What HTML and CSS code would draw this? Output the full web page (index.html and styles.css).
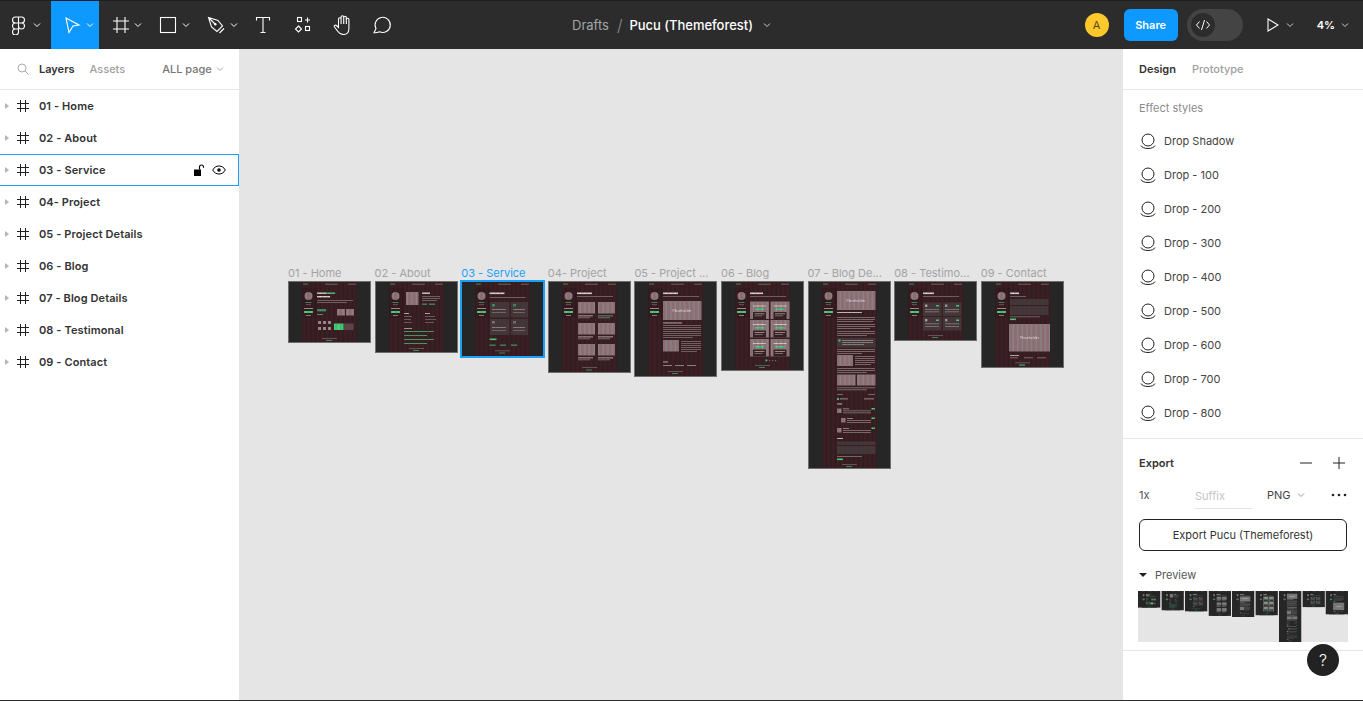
FILE: index.html
```html
<!DOCTYPE html>
<html lang="en">

<head>
    <meta charset="UTF-8" />
    <title>Pucu (Themeforest) - Figma</title>
    <link rel="stylesheet" href="styles.css">
</head>

<body>

    <!-- Frame thumbnails, used on the canvas and again in the export preview -->
    <svg class="sprites" aria-hidden="true">
        <defs>
            <pattern id="cols" width="4.6" height="10" patternUnits="userSpaceOnUse" x="14.5">
                <rect width="3.3" height="10" fill="#7a1f30" />
            </pattern>

            <g id="chrome">
                <rect x="14.5" y="7" width="15" height="30" fill="#1f1416" opacity=".35" />
                <rect x="15" y="2.6" width="5" height="1" fill="#2f9a62" />
                <rect x="37" y="2.8" width="13" height=".7" fill="#8a8a8a" />
                <rect x="60" y="2.8" width="8" height=".7" fill="#8a8a8a" />
                <circle class="ph" cx="20.5" cy="15" r="4" />
                <rect x="17.5" y="21" width="6" height=".8" fill="#39b56f" />
                <rect x="18" y="23.5" width="5" height=".6" fill="#8a8a8a" />
                <rect x="16" y="27" width="9" height=".9" fill="#a9a9a9" />
                <rect x="16" y="30" width="9" height="2" fill="#3ee07f" />
                <rect x="18" y="34" width="5" height=".7" fill="#bcbcbc" />
            </g>

            <symbol id="f1" viewBox="0 0 83 62">
                <rect width="83" height="62" fill="#262626" />
                <rect class="zone" x="14" width="55" height="62" />
                <use href="#chrome" />
                <rect x="29" y="11.5" width="9" height="1.4" fill="#e6e6e6" />
                <rect x="38" y="11.5" width="9" height="1.4" fill="#56d98b" />
                <rect x="29" y="15" width="13" height="1.4" fill="#e6e6e6" />
                <rect x="29" y="19" width="36" height=".7" fill="#8a8a8a" />
                <rect x="29" y="21" width="30" height=".7" fill="#8a8a8a" />
                <rect x="29" y="28" width="9" height="2.4" fill="#2f9a62" />
                <rect x="29" y="33" width="6" height=".8" fill="#9a9a9a" />
                <rect class="ph" x="49" y="28" width="8" height="6.5" />
                <rect class="ph" x="58" y="28" width="8" height="6.5" />
                <rect x="30" y="40" width="3" height="3" fill="#9a8f91" />
                <rect x="35" y="40" width="3" height="3" fill="#9a8f91" />
                <rect x="40" y="40" width="3" height="3" fill="#9a8f91" />
                <rect x="30" y="46" width="3" height="3" fill="#9a8f91" />
                <rect x="35" y="46" width="3" height="3" fill="#9a8f91" />
                <rect x="40" y="46" width="3" height="3" fill="#9a8f91" />
                <rect x="46" y="42.5" width="9.5" height="6.5" fill="#3ee07f" />
                <rect x="56" y="42.5" width="9.5" height="6.5" fill="#5a4a4d" />
                <rect x="34" y="57" width="15" height=".7" fill="#777" />
                <rect x="38" y="59" width="6" height="1" fill="#2f9a62" />
                <rect class="grid" x="14.5" width="54" height="62" />
            </symbol>

            <symbol id="f2" viewBox="0 0 83 72">
                <rect width="83" height="72" fill="#262626" />
                <rect class="zone" x="14" width="55" height="72" />
                <use href="#chrome" />
                <rect class="ph" x="31" y="11" width="12.5" height="13" />
                <rect x="47" y="11.5" width="8" height="1.4" fill="#e6e6e6" />
                <rect x="47" y="15" width="18" height=".7" fill="#8a8a8a" />
                <rect x="47" y="17" width="18" height=".7" fill="#8a8a8a" />
                <rect x="47" y="19" width="15" height=".7" fill="#8a8a8a" />
                <rect x="47" y="22.5" width="5" height="1.4" fill="#2f9a62" />
                <rect x="54" y="22.5" width="6" height="1.4" fill="#2f9a62" />
                <rect x="29" y="32" width="5" height=".9" fill="#c8c8c8" />
                <rect x="50" y="32" width="5" height=".9" fill="#c8c8c8" />
                <rect x="29" y="35" width="8" height=".7" fill="#808080" />
                <rect x="50" y="35" width="10" height=".7" fill="#808080" />
                <rect x="29" y="38" width="7" height=".7" fill="#808080" />
                <rect x="50" y="38" width="11" height=".7" fill="#808080" />
                <rect x="29" y="41" width="8" height=".7" fill="#808080" />
                <rect x="50" y="41" width="9" height=".7" fill="#808080" />
                <rect x="29" y="47" width="8" height=".8" fill="#c8c8c8" />
                <rect x="29" y="50" width="30" height=".9" fill="#3fb873" />
                <rect x="29" y="54" width="23" height=".9" fill="#3fb873" />
                <rect x="29" y="58" width="30" height=".9" fill="#3fb873" />
                <rect x="29" y="62" width="23" height=".9" fill="#3fb873" />
                <rect x="34" y="67" width="15" height=".7" fill="#777" />
                <rect x="38" y="69" width="6" height="1" fill="#2f9a62" />
                <rect class="grid" x="14.5" width="54" height="72" />
            </symbol>

            <symbol id="f3" viewBox="0 0 83 76">
                <rect width="83" height="76" fill="#262626" />
                <rect class="zone" x="14" width="55" height="76" />
                <use href="#chrome" />
                <rect x="28.5" y="11.5" width="15" height="1.6" fill="#e6e6e6" />
                <rect x="28.5" y="16" width="36" height=".7" fill="#8a8a8a" />
                <rect x="29" y="21" width="19.5" height="15.5" fill="#3a3a3a" />
                <rect x="50" y="21" width="17" height="15.5" fill="#3a3a3a" />
                <rect x="29" y="38" width="19.5" height="16" fill="#3a3a3a" />
                <rect x="50" y="38" width="17" height="16" fill="#3a3a3a" />
                <rect x="31" y="23" width="3" height="2.5" fill="#2f9a62" />
                <rect x="52" y="23" width="3" height="2.5" fill="#2f9a62" />
                <rect x="31" y="40" width="3" height="2.5" fill="#777" />
                <rect x="52" y="40" width="3" height="2.5" fill="#777" />
                <rect x="31" y="28" width="14" height=".7" fill="#aaa" />
                <rect x="52" y="28" width="12" height=".7" fill="#aaa" />
                <rect x="31" y="31" width="14" height=".7" fill="#888" />
                <rect x="52" y="31" width="12" height=".7" fill="#888" />
                <rect x="31" y="46" width="14" height=".7" fill="#aaa" />
                <rect x="52" y="46" width="12" height=".7" fill="#aaa" />
                <rect x="31" y="49" width="14" height=".7" fill="#888" />
                <rect x="52" y="49" width="12" height=".7" fill="#888" />
                <rect x="28.5" y="57.5" width="7" height="1.6" fill="#3ee07f" />
                <rect x="28.5" y="63.5" width="6" height="1.4" fill="#2f9a62" />
                <rect x="39" y="63.5" width="6" height="1.4" fill="#2f9a62" />
                <rect x="50" y="63.5" width="6" height="1.4" fill="#2f9a62" />
                <rect x="34" y="69.5" width="15" height=".7" fill="#777" />
                <rect x="38" y="71.5" width="6" height="1" fill="#2f9a62" />
                <rect class="grid" x="14.5" width="54" height="76" />
            </symbol>

            <symbol id="f4" viewBox="0 0 83 92">
                <rect width="83" height="92" fill="#262626" />
                <rect class="zone" x="14" width="55" height="92" />
                <use href="#chrome" />
                <rect x="29" y="11.5" width="15" height="1.6" fill="#e6e6e6" />
                <rect x="29" y="15" width="36" height=".7" fill="#8a8a8a" />
                <rect class="ph" x="30" y="21" width="17" height="11.5" />
                <rect class="ph" x="50" y="21" width="17" height="11.5" />
                <rect class="ph" x="30" y="42" width="17" height="11.5" />
                <rect class="ph" x="50" y="42" width="17" height="11.5" />
                <rect class="ph" x="30" y="63" width="17" height="11.5" />
                <rect class="ph" x="50" y="63" width="17" height="11.5" />
                <rect x="30" y="34.5" width="15" height=".8" fill="#ddd" />
                <rect x="50" y="34.5" width="15" height=".8" fill="#4fc783" />
                <rect x="30" y="36.5" width="12" height=".7" fill="#999" />
                <rect x="50" y="36.5" width="12" height=".7" fill="#999" />
                <rect x="30" y="55.5" width="15" height=".8" fill="#ddd" />
                <rect x="50" y="55.5" width="15" height=".8" fill="#ddd" />
                <rect x="30" y="57.5" width="12" height=".7" fill="#999" />
                <rect x="50" y="57.5" width="12" height=".7" fill="#999" />
                <rect x="30" y="76.5" width="15" height=".8" fill="#ddd" />
                <rect x="50" y="76.5" width="15" height=".8" fill="#ddd" />
                <rect x="30" y="78.5" width="12" height=".7" fill="#999" />
                <rect x="50" y="78.5" width="12" height=".7" fill="#999" />
                <rect x="34" y="86" width="15" height=".7" fill="#777" />
                <rect x="38" y="88.5" width="6" height="1" fill="#2f9a62" />
                <rect class="grid" x="14.5" width="54" height="92" />
            </symbol>

            <symbol id="f5" viewBox="0 0 83 96">
                <rect width="83" height="96" fill="#262626" />
                <rect class="zone" x="14" width="55" height="96" />
                <use href="#chrome" />
                <rect x="29" y="11.5" width="15" height="1.6" fill="#e6e6e6" />
                <rect x="29" y="15" width="36" height=".7" fill="#8a8a8a" />
                <rect class="ph" x="29" y="20" width="38.5" height="19" />
                <text class="ph-label" x="48" y="31">Placeholder</text>
                <rect x="29" y="41.5" width="19" height=".9" fill="#ccc" />
                <rect x="29" y="44" width="38" height=".7" fill="#8a8a8a" />
                <rect x="29" y="46" width="38" height=".7" fill="#8a8a8a" />
                <rect x="29" y="48" width="38" height=".7" fill="#8a8a8a" />
                <rect x="29" y="50" width="38" height=".7" fill="#8a8a8a" />
                <rect x="29" y="52" width="38" height=".7" fill="#8a8a8a" />
                <rect x="29" y="54" width="38" height=".7" fill="#8a8a8a" />
                <rect x="29" y="56" width="30" height=".7" fill="#8a8a8a" />
                <rect class="ph" x="29" y="59" width="16" height="11.5" />
                <rect x="47" y="60" width="20" height=".7" fill="#8a8a8a" />
                <rect x="47" y="62" width="20" height=".7" fill="#8a8a8a" />
                <rect x="47" y="64" width="20" height=".7" fill="#8a8a8a" />
                <rect x="47" y="66" width="20" height=".7" fill="#8a8a8a" />
                <rect x="47" y="68" width="20" height=".7" fill="#8a8a8a" />
                <rect x="47" y="70" width="16" height=".7" fill="#8a8a8a" />
                <rect x="29" y="80.5" width="5" height=".9" fill="#ccc" />
                <rect x="29" y="84" width="9" height=".8" fill="#aaa" />
                <rect x="41" y="84" width="9" height=".8" fill="#aaa" />
                <rect x="53" y="84" width="9" height=".8" fill="#aaa" />
                <rect x="34" y="90" width="15" height=".7" fill="#777" />
                <rect x="38" y="92" width="6" height="1" fill="#2f9a62" />
                <rect class="grid" x="14.5" width="54" height="96" />
            </symbol>

            <g id="post">
                <rect class="ph" width="19" height="17.5" />
                <rect x="3" y="4" width="13" height="1" fill="#d8d8d8" />
                <rect x="5" y="7" width="9" height="1.6" fill="#3ee07f" />
                <rect x="3" y="10.5" width="13" height="7" fill="#2a2022" />
                <rect x="4.5" y="12" width="10" height=".7" fill="#ccc" />
                <rect x="4.5" y="14" width="8" height=".7" fill="#999" />
            </g>

            <symbol id="f6" viewBox="0 0 83 90">
                <rect width="83" height="90" fill="#262626" />
                <rect class="zone" x="14" width="55" height="90" />
                <use href="#chrome" />
                <rect x="29" y="11.5" width="13" height="1.6" fill="#e6e6e6" />
                <rect x="29" y="15" width="36" height=".7" fill="#8a8a8a" />
                <use href="#post" x="29" y="20.5" />
                <use href="#post" x="49.5" y="20.5" />
                <use href="#post" x="29" y="39" />
                <use href="#post" x="49.5" y="39" />
                <use href="#post" x="29" y="58" />
                <use href="#post" x="49.5" y="58" />
                <rect x="44.5" y="78.5" width="1.8" height="1.8" fill="#3ee07f" />
                <rect x="48" y="79" width="1.2" height="1.2" fill="#777" />
                <rect x="51" y="79" width="1.2" height="1.2" fill="#777" />
                <rect x="54" y="79" width="1.2" height="1.2" fill="#777" />
                <rect x="34" y="84" width="15" height=".7" fill="#777" />
                <rect x="38" y="86" width="6" height="1" fill="#2f9a62" />
                <rect class="grid" x="14.5" width="54" height="90" />
            </symbol>

            <symbol id="f7" viewBox="0 0 83 188">
                <rect width="83" height="188" fill="#262626" />
                <rect class="zone" x="14" width="55" height="188" />
                <use href="#chrome" />
                <rect class="ph" x="29" y="10" width="38.5" height="19" />
                <text class="ph-label" x="48" y="21">Placeholder</text>
                <rect x="29" y="31" width="25" height="1" fill="#ccc" />
                <rect x="29" y="36" width="38" height=".7" fill="#999" />
                <rect x="29" y="38" width="38" height=".7" fill="#999" />
                <rect x="29" y="40" width="36" height=".7" fill="#999" />
                <rect x="29" y="43" width="38" height=".7" fill="#999" />
                <rect x="29" y="45" width="38" height=".7" fill="#999" />
                <rect x="29" y="47" width="33" height=".7" fill="#999" />
                <rect x="29" y="50" width="38" height=".7" fill="#999" />
                <rect x="29" y="52" width="38" height=".7" fill="#999" />
                <rect x="29" y="54" width="30" height=".7" fill="#999" />
                <rect x="29" y="57" width="38.5" height="9.5" fill="#3a3a3a" />
                <rect x="30.5" y="58.5" width="2" height="2" fill="#3ee07f" />
                <rect x="34" y="59" width="31" height=".7" fill="#aaa" />
                <rect x="34" y="61" width="31" height=".7" fill="#aaa" />
                <rect x="34" y="63" width="22" height=".7" fill="#aaa" />
                <rect x="29" y="68" width="38" height=".7" fill="#999" />
                <rect x="29" y="70" width="38" height=".7" fill="#999" />
                <rect x="29" y="72" width="25" height=".7" fill="#999" />
                <rect class="ph" x="29" y="74" width="16" height="11" />
                <rect x="47" y="75" width="20" height=".7" fill="#999" />
                <rect x="47" y="77" width="20" height=".7" fill="#999" />
                <rect x="47" y="79" width="20" height=".7" fill="#999" />
                <rect x="47" y="81" width="20" height=".7" fill="#999" />
                <rect x="47" y="83" width="16" height=".7" fill="#999" />
                <rect x="29" y="87" width="38" height=".7" fill="#999" />
                <rect x="29" y="89" width="38" height=".7" fill="#999" />
                <rect x="29" y="91" width="30" height=".7" fill="#999" />
                <rect class="ph" x="29" y="93.5" width="18.5" height="11" />
                <rect class="ph" x="49" y="93.5" width="18.5" height="11" />
                <rect x="29" y="106.5" width="38" height=".7" fill="#999" />
                <rect x="29" y="108.5" width="30" height=".7" fill="#999" />
                <rect x="29" y="113" width="6" height=".7" fill="#999" />
                <rect x="60" y="113" width="7" height=".7" fill="#999" />
                <rect x="29" y="117" width="2" height="2" fill="#3ee07f" />
                <rect x="32" y="117.5" width="8" height=".8" fill="#bbb" />
                <rect x="56" y="117.5" width="10" height=".8" fill="#bbb" />
                <rect x="29" y="122.5" width="5" height=".9" fill="#ddd" />
                <rect class="ph" x="29" y="127.5" width="4.5" height="4.5" />
                <rect x="35" y="127.5" width="6" height=".7" fill="#bbb" />
                <rect x="35" y="129.5" width="28" height=".7" fill="#999" />
                <rect x="35" y="131.5" width="28" height=".7" fill="#999" />
                <rect x="63.5" y="127" width="3.5" height="1.5" fill="#3ee07f" />
                <rect class="ph" x="33" y="137" width="4.5" height="4.5" />
                <rect x="39" y="137" width="6" height=".7" fill="#bbb" />
                <rect x="39" y="139" width="24" height=".7" fill="#999" />
                <rect x="39" y="141" width="24" height=".7" fill="#999" />
                <rect x="63.5" y="136.5" width="3.5" height="1.5" fill="#3ee07f" />
                <rect class="ph" x="29" y="147" width="4.5" height="4.5" />
                <rect x="35" y="147" width="6" height=".7" fill="#bbb" />
                <rect x="35" y="149" width="28" height=".7" fill="#999" />
                <rect x="35" y="151" width="28" height=".7" fill="#999" />
                <rect x="63.5" y="146.5" width="3.5" height="1.5" fill="#3ee07f" />
                <rect x="29" y="157" width="6" height=".9" fill="#ddd" />
                <rect x="29" y="160.5" width="38.5" height="3.5" fill="#3a3a3a" />
                <rect x="29" y="165" width="38.5" height="8" fill="#3a3a3a" />
                <rect x="29" y="175" width="25" height=".7" fill="#999" />
                <rect x="29" y="177.5" width="6" height="1.6" fill="#3ee07f" />
                <rect x="34" y="183" width="15" height=".7" fill="#777" />
                <rect x="38" y="185" width="6" height="1" fill="#2f9a62" />
                <rect class="grid" x="14.5" width="54" height="188" />
            </symbol>

            <symbol id="f8" viewBox="0 0 83 60">
                <rect width="83" height="60" fill="#262626" />
                <rect class="zone" x="14" width="55" height="60" />
                <use href="#chrome" />
                <rect x="29" y="11.5" width="11" height="1.6" fill="#e6e6e6" />
                <rect x="29" y="15" width="36" height=".7" fill="#8a8a8a" />
                <rect x="29" y="21.5" width="18.5" height="13.5" fill="#3a3a3a" />
                <rect x="49" y="21.5" width="18.5" height="13.5" fill="#3a3a3a" />
                <rect x="29" y="36" width="18.5" height="13.5" fill="#3a3a3a" />
                <rect x="49" y="36" width="18.5" height="13.5" fill="#3a3a3a" />
                <rect x="31" y="23.5" width="2.4" height="2.4" fill="#aaa" />
                <rect x="51" y="23.5" width="2.4" height="2.4" fill="#aaa" />
                <rect x="31" y="38" width="2.4" height="2.4" fill="#aaa" />
                <rect x="51" y="38" width="2.4" height="2.4" fill="#aaa" />
                <rect x="42" y="24" width="3" height="1.5" fill="#3ee07f" />
                <rect x="62" y="24" width="3" height="1.5" fill="#3ee07f" />
                <rect x="42" y="38.5" width="3" height="1.5" fill="#3ee07f" />
                <rect x="62" y="38.5" width="3" height="1.5" fill="#3ee07f" />
                <rect x="31" y="28" width="14" height=".7" fill="#999" />
                <rect x="51" y="28" width="14" height=".7" fill="#999" />
                <rect x="31" y="30.5" width="14" height=".7" fill="#999" />
                <rect x="51" y="30.5" width="14" height=".7" fill="#999" />
                <rect x="31" y="42.5" width="14" height=".7" fill="#999" />
                <rect x="51" y="42.5" width="14" height=".7" fill="#999" />
                <rect x="31" y="45" width="14" height=".7" fill="#999" />
                <rect x="51" y="45" width="14" height=".7" fill="#999" />
                <rect x="34" y="54" width="15" height=".7" fill="#777" />
                <rect x="38" y="56" width="6" height="1" fill="#2f9a62" />
                <rect class="grid" x="14.5" width="54" height="60" />
            </symbol>

            <symbol id="f9" viewBox="0 0 83 87">
                <rect width="83" height="87" fill="#262626" />
                <rect class="zone" x="14" width="55" height="87" />
                <use href="#chrome" />
                <rect x="29" y="11.5" width="9" height="1.6" fill="#e6e6e6" />
                <rect x="29" y="15" width="16" height=".7" fill="#8a8a8a" />
                <rect x="29" y="18" width="38.5" height="6" fill="#3a3a3a" />
                <rect x="29" y="25" width="38.5" height="9" fill="#3a3a3a" />
                <rect x="29" y="35.5" width="30" height=".7" fill="#8a8a8a" />
                <rect x="29" y="37.5" width="6" height="1.6" fill="#3ee07f" />
                <rect class="ph" x="28" y="43" width="41" height="27.5" />
                <text class="ph-label" x="48.5" y="58">Placeholder</text>
                <rect x="29" y="74" width="9" height=".9" fill="#ccc" />
                <rect x="29" y="76.5" width="8" height=".7" fill="#999" />
                <rect x="43" y="76.5" width="9" height=".7" fill="#999" />
                <rect x="56" y="76.5" width="9" height=".7" fill="#999" />
                <rect x="34" y="81.5" width="15" height=".7" fill="#777" />
                <rect x="38" y="83.5" width="6" height="1" fill="#3ee07f" />
                <rect class="grid" x="14.5" width="54" height="87" />
            </symbol>
        </defs>
    </svg>

    <!-- Top toolbar -->
    <header class="toolbar">
        <div class="tool tool-menu">
            <svg class="icon" viewBox="0 0 20 20" fill="none" stroke="#fff" stroke-width="1.1">
                <path d="M9.5 2H6.5a3 3 0 0 0 0 6h3zM9.5 2h3a3 3 0 0 1 0 6h-3zM9.5 8H6.5a3 3 0 0 0 0 6h3zM9.5 8h3a3 3 0 1 1 0 6 3 3 0 0 1-3-3zM9.5 14H6.5a3 3 0 1 0 3 3z" />
            </svg>
            <svg class="chev" viewBox="0 0 8 8"><path d="M1 2.5l3 3 3-3" /></svg>
        </div>
        <div class="tool tool-on">
            <svg class="icon" viewBox="0 0 20 20" fill="none" stroke="#fff" stroke-width="1.1">
                <path d="M4 3l13 7-6 1-4 6.5z" />
            </svg>
            <svg class="chev" viewBox="0 0 8 8"><path d="M1 2.5l3 3 3-3" /></svg>
        </div>
        <div class="tool">
            <svg class="icon" viewBox="0 0 20 20" fill="none" stroke="#fff" stroke-width="1.1">
                <path d="M7 2v16M15 2v16M3 6h16M3 14h16" />
            </svg>
            <svg class="chev" viewBox="0 0 8 8"><path d="M1 2.5l3 3 3-3" /></svg>
        </div>
        <div class="tool">
            <svg class="icon" viewBox="0 0 20 20" fill="none" stroke="#fff" stroke-width="1.1">
                <rect x="2.5" y="2.5" width="15" height="15" />
            </svg>
            <svg class="chev" viewBox="0 0 8 8"><path d="M1 2.5l3 3 3-3" /></svg>
        </div>
        <div class="tool">
            <svg class="icon" viewBox="0 0 20 20" fill="none" stroke="#fff" stroke-width="1.1">
                <path d="M2.5 2.5L12 5.5l4.5 5.5-5.5 5.5-5.5-4.5zM2.5 2.5L9 9M13.5 18L18 13.5" />
                <circle cx="9.3" cy="9.3" r="1.2" fill="#fff" stroke="none" />
            </svg>
            <svg class="chev" viewBox="0 0 8 8"><path d="M1 2.5l3 3 3-3" /></svg>
        </div>
        <div class="tool tool-plain">
            <svg class="icon" viewBox="0 0 20 20" fill="none" stroke="#fff" stroke-width="1.1">
                <path d="M3.5 5.5v-3h13v3M10 2.5v15M7.5 17.5h5" />
            </svg>
        </div>
        <div class="tool tool-plain">
            <svg class="icon" viewBox="0 0 20 20" fill="none" stroke="#fff" stroke-width="1.1">
                <rect x="4.5" y="2.5" width="4" height="4" />
                <path d="M14.5 2.5v5M12 5h5M5.5 11l3 3-3 3-3-3z" />
                <rect x="12.5" y="11.5" width="4" height="4" />
            </svg>
        </div>
        <div class="tool tool-plain">
            <svg class="icon" viewBox="0 0 20 20" fill="none" stroke="#fff" stroke-width="1.1">
                <path d="M5.5 11V4a1.3 1.3 0 0 1 2.6 0v5V2a1.3 1.3 0 0 1 2.6 0v7V2.6a1.3 1.3 0 0 1 2.6 0V9V4.5a1.3 1.3 0 0 1 2.6 0V14c0 3.5-2.5 5.5-5.5 5.5-2.5 0-4-1-5.5-3L1.5 12c-.8-1.2.8-2.5 2-1.5l2 2z" />
            </svg>
        </div>
        <div class="tool tool-plain">
            <svg class="icon" viewBox="0 0 20 20" fill="none" stroke="#fff" stroke-width="1.1">
                <path d="M1 17.7l2-4.2A7.6 7.6 0 1 1 6.5 16.8c-2 .9-4 1.1-5.5.9z" />
            </svg>
        </div>

        <div class="doc-title">
            <span class="doc-folder">Drafts</span>
            <span class="doc-slash">/</span>
            <span class="doc-name">Pucu (Themeforest)</span>
            <svg class="chev" viewBox="0 0 8 8"><path d="M1 2.5l3 3 3-3" /></svg>
        </div>

        <div class="actions">
            <div class="avatar">A</div>
            <button class="share">Share</button>
            <div class="dev-toggle">
                <div class="dev-knob">
                    <svg viewBox="0 0 16 16" fill="none" stroke="#fff" stroke-width="1"><path d="M4.5 4.5L1.5 8l3 3.5M11.5 4.5l3 3.5-3 3.5M9.5 3l-3 10" /></svg>
                </div>
            </div>
            <svg class="play" viewBox="0 0 12 14" fill="none" stroke="#fff" stroke-width="1.1"><path d="M1 1l10 6-10 6z" /></svg>
            <svg class="chev" viewBox="0 0 8 8"><path d="M1 2.5l3 3 3-3" /></svg>
            <span class="zoom-level">4%</span>
            <svg class="chev" viewBox="0 0 8 8"><path d="M1 2.5l3 3 3-3" /></svg>
        </div>
    </header>

    <main class="workspace">

        <!-- Layers panel -->
        <aside class="left-panel">
            <div class="tabs left-tabs">
                <svg class="search" viewBox="0 0 12 12" fill="none" stroke="#aaa" stroke-width="1"><circle cx="5" cy="5" r="4" /><path d="M8 8l3.500 3.500" /></svg>
                <span class="tab tab-active">Layers</span>
                <span class="tab">Assets</span>
                <span class="page-pick">ALL page</span>
                <svg class="chev" viewBox="0 0 8 8"><path d="M1 2.5l3 3 3-3" /></svg>
            </div>
            <ul class="layers">
                <li class="layer"><i class="caret"></i><svg class="hash" viewBox="0 0 12 12"><path d="M3.5 0v12M8.5 0v12M0 3.5h12M0 8.5h12" /></svg><span>01 - Home</span></li>
                <li class="layer"><i class="caret"></i><svg class="hash" viewBox="0 0 12 12"><path d="M3.5 0v12M8.5 0v12M0 3.5h12M0 8.5h12" /></svg><span>02 - About</span></li>
                <li class="layer layer-hover"><i class="caret"></i><svg class="hash" viewBox="0 0 12 12"><path d="M3.5 0v12M8.5 0v12M0 3.5h12M0 8.5h12" /></svg><span>03 - Service</span>
                    <svg class="lock" viewBox="0 0 11 12"><path d="M0 5.5h7V12H0z" fill="#000" /><path d="M5.5 5.5V3a2 2 0 0 1 4 0v.8" fill="none" stroke="#000" stroke-width="1.1" /></svg>
                    <svg class="eye" viewBox="0 0 14 10" fill="none" stroke="#000" stroke-width="1"><path d="M.7 5C2.2 2.2 4.4 1 7 1s4.800 1.200 6.300 4C11.800 7.800 9.600 9 7 9S2.200 7.800.7 5z" /><circle cx="7" cy="5" r="1.800" fill="#000" stroke="none" /></svg>
                </li>
                <li class="layer"><i class="caret"></i><svg class="hash" viewBox="0 0 12 12"><path d="M3.5 0v12M8.5 0v12M0 3.5h12M0 8.5h12" /></svg><span>04- Project</span></li>
                <li class="layer"><i class="caret"></i><svg class="hash" viewBox="0 0 12 12"><path d="M3.5 0v12M8.5 0v12M0 3.5h12M0 8.5h12" /></svg><span>05 - Project Details</span></li>
                <li class="layer"><i class="caret"></i><svg class="hash" viewBox="0 0 12 12"><path d="M3.5 0v12M8.5 0v12M0 3.5h12M0 8.5h12" /></svg><span>06 - Blog</span></li>
                <li class="layer"><i class="caret"></i><svg class="hash" viewBox="0 0 12 12"><path d="M3.5 0v12M8.5 0v12M0 3.5h12M0 8.5h12" /></svg><span>07 - Blog Details</span></li>
                <li class="layer"><i class="caret"></i><svg class="hash" viewBox="0 0 12 12"><path d="M3.5 0v12M8.5 0v12M0 3.5h12M0 8.5h12" /></svg><span>08 - Testimonal</span></li>
                <li class="layer"><i class="caret"></i><svg class="hash" viewBox="0 0 12 12"><path d="M3.5 0v12M8.5 0v12M0 3.5h12M0 8.5h12" /></svg><span>09 - Contact</span></li>
            </ul>
        </aside>

        <!-- Canvas with the frames -->
        <section class="canvas">
            <div class="board">
                <div class="board-label">01 - Home</div>
                <svg class="thumb h62"><use href="#f1" /></svg>
            </div>
            <div class="board">
                <div class="board-label">02 - About</div>
                <svg class="thumb h72"><use href="#f2" /></svg>
            </div>
            <div class="board board-selected">
                <div class="board-label">03 - Service</div>
                <svg class="thumb h76"><use href="#f3" /></svg>
            </div>
            <div class="board">
                <div class="board-label">04- Project</div>
                <svg class="thumb h92"><use href="#f4" /></svg>
            </div>
            <div class="board">
                <div class="board-label">05 - Project ...</div>
                <svg class="thumb h96"><use href="#f5" /></svg>
            </div>
            <div class="board">
                <div class="board-label">06 - Blog</div>
                <svg class="thumb h90"><use href="#f6" /></svg>
            </div>
            <div class="board">
                <div class="board-label">07 - Blog De...</div>
                <svg class="thumb h188"><use href="#f7" /></svg>
            </div>
            <div class="board">
                <div class="board-label">08 - Testimo...</div>
                <svg class="thumb h60"><use href="#f8" /></svg>
            </div>
            <div class="board">
                <div class="board-label">09 - Contact</div>
                <svg class="thumb h87"><use href="#f9" /></svg>
            </div>
        </section>

        <!-- Design panel -->
        <aside class="right-panel">
            <div class="tabs right-tabs">
                <span class="tab tab-active">Design</span>
                <span class="tab">Prototype</span>
            </div>

            <section class="effects">
                <div class="effects-title">Effect styles</div>
                <div class="effect"><svg class="effect-icon" viewBox="0 0 16 16"><circle cx="8" cy="7" r="6" /><path d="M1 12.5c1.5 4 12.5 4 14 0" /></svg>Drop Shadow</div>
                <div class="effect"><svg class="effect-icon" viewBox="0 0 16 16"><circle cx="8" cy="7" r="6" /><path d="M1 12.5c1.5 4 12.5 4 14 0" /></svg>Drop - 100</div>
                <div class="effect"><svg class="effect-icon" viewBox="0 0 16 16"><circle cx="8" cy="7" r="6" /><path d="M1 12.5c1.5 4 12.5 4 14 0" /></svg>Drop - 200</div>
                <div class="effect"><svg class="effect-icon" viewBox="0 0 16 16"><circle cx="8" cy="7" r="6" /><path d="M1 12.5c1.5 4 12.5 4 14 0" /></svg>Drop - 300</div>
                <div class="effect"><svg class="effect-icon" viewBox="0 0 16 16"><circle cx="8" cy="7" r="6" /><path d="M1 12.5c1.5 4 12.5 4 14 0" /></svg>Drop - 400</div>
                <div class="effect"><svg class="effect-icon" viewBox="0 0 16 16"><circle cx="8" cy="7" r="6" /><path d="M1 12.5c1.5 4 12.5 4 14 0" /></svg>Drop - 500</div>
                <div class="effect"><svg class="effect-icon" viewBox="0 0 16 16"><circle cx="8" cy="7" r="6" /><path d="M1 12.5c1.5 4 12.5 4 14 0" /></svg>Drop - 600</div>
                <div class="effect"><svg class="effect-icon" viewBox="0 0 16 16"><circle cx="8" cy="7" r="6" /><path d="M1 12.5c1.5 4 12.5 4 14 0" /></svg>Drop - 700</div>
                <div class="effect"><svg class="effect-icon" viewBox="0 0 16 16"><circle cx="8" cy="7" r="6" /><path d="M1 12.5c1.5 4 12.5 4 14 0" /></svg>Drop - 800</div>
            </section>

            <section class="export">
                <div class="export-head">
                    <span class="export-title">Export</span>
                    <svg class="export-btn" viewBox="0 0 12 12"><path d="M0 6h12" /></svg>
                    <svg class="export-btn export-plus" viewBox="0 0 12 12"><path d="M0 6h12M6 0v12" /></svg>
                </div>
                <div class="export-row">
                    <span class="scale">1x</span>
                    <span class="suffix">Suffix</span>
                    <span class="format">PNG</span>
                    <svg class="chev" viewBox="0 0 8 8"><path d="M1 2.5l3 3 3-3" /></svg>
                    <svg class="dots" viewBox="0 0 16 4"><circle cx="2" cy="2" r="1.3" /><circle cx="8" cy="2" r="1.3" /><circle cx="14" cy="2" r="1.3" /></svg>
                </div>
                <button class="export-action">Export Pucu (Themeforest)</button>
                <div class="preview-head"><i class="caret-down"></i>Preview</div>
                <svg class="preview" viewBox="0 0 210 51">
                    <use href="#f1" x="0" y="0" width="22.5" height="16.8" />
                    <use href="#f2" x="23.4" y="0" width="22.5" height="19.5" />
                    <use href="#f3" x="47" y="0" width="22.5" height="20.6" />
                    <use href="#f4" x="70.5" y="0" width="22.5" height="24.9" />
                    <use href="#f5" x="94" y="0" width="22.5" height="26" />
                    <use href="#f6" x="117.4" y="0" width="22.5" height="24.4" />
                    <use href="#f7" x="141" y="0" width="22.5" height="51" />
                    <use href="#f8" x="164.4" y="0" width="22.5" height="16.3" />
                    <use href="#f9" x="187.5" y="0" width="22.5" height="23.6" />
                </svg>
            </section>

            <button class="help">?</button>
        </aside>
    </main>

</body>

</html>
```

FILE: styles.css
```css
* {
    box-sizing: border-box;
}

body {
    margin: 0;
    height: 701px;
    overflow: hidden;
    display: flex;
    flex-direction: column;
    font-family: Inter, "Noto Sans", sans-serif;
    font-size: 11px;
    color: #333;
    background-color: #fff;
    border-bottom: 1px solid #2c2c2c;
}

.sprites {
    position: absolute;
    width: 0;
    height: 0;
}

.chev {
    width: 8px;
    height: 8px;
    flex: none;
    fill: none;
    stroke: #ccc;
    stroke-width: 1;
}

/* Toolbar */
.toolbar {
    height: 49px;
    flex: none;
    display: flex;
    align-items: stretch;
    background-color: #2c2c2c;
    border-top: 1px solid #1e1e1e;
}

.tool {
    width: 48px;
    display: flex;
    align-items: center;
    padding-left: 11px;
}

.tool-menu {
    width: 51px;
    padding-left: 9px;
}

.tool-menu .chev {
    margin-left: 3px;
}

.tool-on {
    background-color: #0d99ff;
}

.tool-plain {
    width: 40px;
    padding-left: 10px;
}

.tool .chev {
    margin-left: 4px;
    stroke: #fff;
}

.icon {
    width: 20px;
    height: 20px;
    flex: none;
}

.doc-title {
    margin-left: 169px;
    display: flex;
    align-items: center;
    font-size: 13px;
}

.doc-folder {
    color: #a5a5a5;
}

.doc-slash {
    margin: 0 7px 0 8px;
    color: #8c8c8c;
    font-size: 16px;
    font-weight: 300;
}

.doc-name {
    color: #fff;
    font-weight: 500;
    letter-spacing: -.03px;
}

.doc-title .chev {
    margin-left: 10px;
}

.actions {
    margin-left: auto;
    display: flex;
    align-items: center;
    padding-right: 14px;
}

.avatar {
    width: 24px;
    height: 24px;
    border-radius: 50%;
    background-color: #fcc82b;
    color: #5a4a10;
    font-size: 11px;
    line-height: 24px;
    text-align: center;
}

.share {
    width: 54px;
    height: 32px;
    margin-left: 15px;
    border: none;
    border-radius: 6px;
    background-color: #0d99ff;
    color: #fff;
    font-family: inherit;
    font-size: 11px;
    font-weight: 600;
}

.dev-toggle {
    width: 56px;
    height: 32px;
    margin-left: 9px;
    padding: 4px 0 0 4px;
    border-radius: 16px;
    background-color: #444;
}

.dev-knob {
    width: 24px;
    height: 24px;
    padding: 4px;
    border-radius: 50%;
    background-color: #2c2c2c;
}

.dev-knob svg {
    display: block;
}

.play {
    width: 12px;
    height: 14px;
    margin-left: 24px;
}

.actions .play + .chev {
    margin-left: 7px;
}

.zoom-level {
    margin-left: 23px;
    color: #fff;
    font-weight: 600;
}

.zoom-level + .chev {
    margin-left: 6px;
}

/* Panels */
.workspace {
    flex: 1;
    min-height: 0;
    display: flex;
}

.left-panel {
    width: 239px;
    flex: none;
}

.right-panel {
    width: 240px;
    flex: none;
    position: relative;
}

.tabs {
    height: 41px;
    display: flex;
    align-items: center;
    border-bottom: 1px solid #e5e5e5;
}

.left-tabs {
    padding-left: 17px;
}

.right-tabs {
    padding-left: 16px;
    gap: 16px;
}

.tab {
    color: #a0a0a0;
    font-weight: 500;
}

.tab-active {
    color: #333;
    font-weight: 600;
}

.search {
    width: 12px;
    height: 12px;
    margin-right: 10px;
}

.left-tabs .tab-active {
    margin-right: 15px;
}

.page-pick {
    margin-left: 37px;
    color: #777;
    font-weight: 500;
}

.left-tabs .chev {
    margin-left: 4px;
    stroke: #aaa;
}

/* Layers */
.layers {
    list-style: none;
    margin: 0;
    padding: 0;
}

.layer {
    height: 32px;
    display: flex;
    align-items: center;
    color: #333;
    font-weight: 600;
    letter-spacing: .1px;
}

.layer-hover {
    border: 1px solid #18a0fb;
    border-left: none;
}

.caret {
    width: 0;
    height: 0;
    margin-left: 5px;
    border-left: 4px solid #b3b3b3;
    border-top: 3px solid transparent;
    border-bottom: 3px solid transparent;
}

.hash {
    width: 12px;
    height: 12px;
    margin: 0 10px 0 8px;
    fill: none;
    stroke: #222;
    stroke-width: 1;
}

.lock {
    width: 11px;
    height: 12px;
    margin-left: auto;
}

.eye {
    width: 14px;
    height: 10px;
    margin: 0 12px 0 7px;
}

/* Canvas */
.canvas {
    flex: 1;
    min-width: 0;
    display: flex;
    align-items: flex-start;
    gap: 3.6px;
    padding: 217px 0 0 49px;
    background-color: #e5e5e5;
}

.board {
    width: 83px;
    flex: none;
}

.board-label {
    height: 15px;
    line-height: 15px;
    color: #a3a3a3;
    font-size: 11px;
    white-space: nowrap;
}

.board-selected .board-label {
    color: #18a0fb;
}

.thumb {
    display: block;
    width: 83px;
    outline: 1px solid #6e6e6e;
    outline-offset: -1px;
    --zone: #2c1e20;
    --ph: #8e8285;
    --grid: .2;
}

.thumb use {
    width: 83px;
    height: 100%;
}

.thumb > use {
    filter: blur(.55px);
}

.board-selected .thumb {
    outline: 2px solid #18a0fb;
    outline-offset: -1px;
}

.h60 { height: 60px; }
.h62 { height: 62px; }
.h72 { height: 72px; }
.h76 { height: 76px; }
.h87 { height: 87px; }
.h90 { height: 90px; }
.h92 { height: 92px; }
.h96 { height: 96px; }
.h188 { height: 188px; }

/* Parts of the frame thumbnails */
.zone {
    fill: var(--zone);
}

.ph {
    fill: var(--ph);
}

.grid {
    fill: url(#cols);
    opacity: var(--grid);
}

.ph-label {
    fill: #eee;
    font-size: 3.4px;
    text-anchor: middle;
}

/* Effect styles */
.effects {
    padding-bottom: 8px;
    border-bottom: 1px solid #e5e5e5;
}

.effects-title {
    height: 34px;
    padding: 3px 0 0 16px;
    line-height: 31px;
    color: #8c8c8c;
}

.effect {
    height: 34px;
    display: flex;
    align-items: center;
    padding-left: 17px;
    color: #444;
}

.effect-icon {
    width: 16px;
    height: 16px;
    margin-right: 8px;
    fill: none;
    stroke: #222;
    stroke-width: 1;
}

/* Export */
.export {
    padding: 8px 15px 8px 16px;
    border-bottom: 1px solid #e5e5e5;
}

.export-head {
    height: 32px;
    display: flex;
    align-items: center;
}

.export-title {
    color: #333;
    font-weight: 600;
}

.export-btn {
    width: 12px;
    height: 12px;
    margin-left: auto;
    fill: none;
    stroke: #222;
    stroke-width: 1;
}

.export-plus {
    margin: 0 3px 0 21px;
}

.export-row {
    height: 32px;
    display: flex;
    align-items: center;
}

.scale {
    width: 55px;
    color: #555;
}

.suffix {
    width: 58px;
    height: 26px;
    margin-right: 15px;
    padding-left: 1px;
    line-height: 26px;
    color: #c4c4c4;
    border-bottom: 1px solid #e5e5e5;
    margin-top: 1px;
}

.format {
    color: #444;
}

.export-row .chev {
    margin-left: 6px;
    stroke: #999;
}

.dots {
    width: 16px;
    height: 4px;
    margin: 0 1px 0 auto;
    fill: #222;
}

.export-action {
    width: 208px;
    height: 32px;
    margin-top: 8px;
    border: 1px solid #222;
    border-radius: 6px;
    background-color: #fff;
    color: #333;
    font-family: inherit;
    font-size: 11px;
    display: block;
}

.preview-head {
    height: 32px;
    margin-top: 8px;
    display: flex;
    align-items: center;
    color: #555;
}

.caret-down {
    width: 0;
    height: 0;
    margin: 0 8px 0 0;
    border-top: 4px solid #222;
    border-left: 4px solid transparent;
    border-right: 4px solid transparent;
}

.preview {
    display: block;
    width: 210px;
    height: 51px;
    margin-left: -1px;
    background-color: #e5e5e5;
    --zone: #262626;
    --ph: #777;
    --grid: 0;
}

/* Help button sits over the panel */
.help {
    position: absolute;
    right: 24px;
    bottom: 24px;
    width: 32px;
    height: 32px;
    border: none;
    border-radius: 50%;
    background-color: #222;
    color: #fff;
    font-family: inherit;
    font-size: 16px;
    font-weight: 300;
}
```
